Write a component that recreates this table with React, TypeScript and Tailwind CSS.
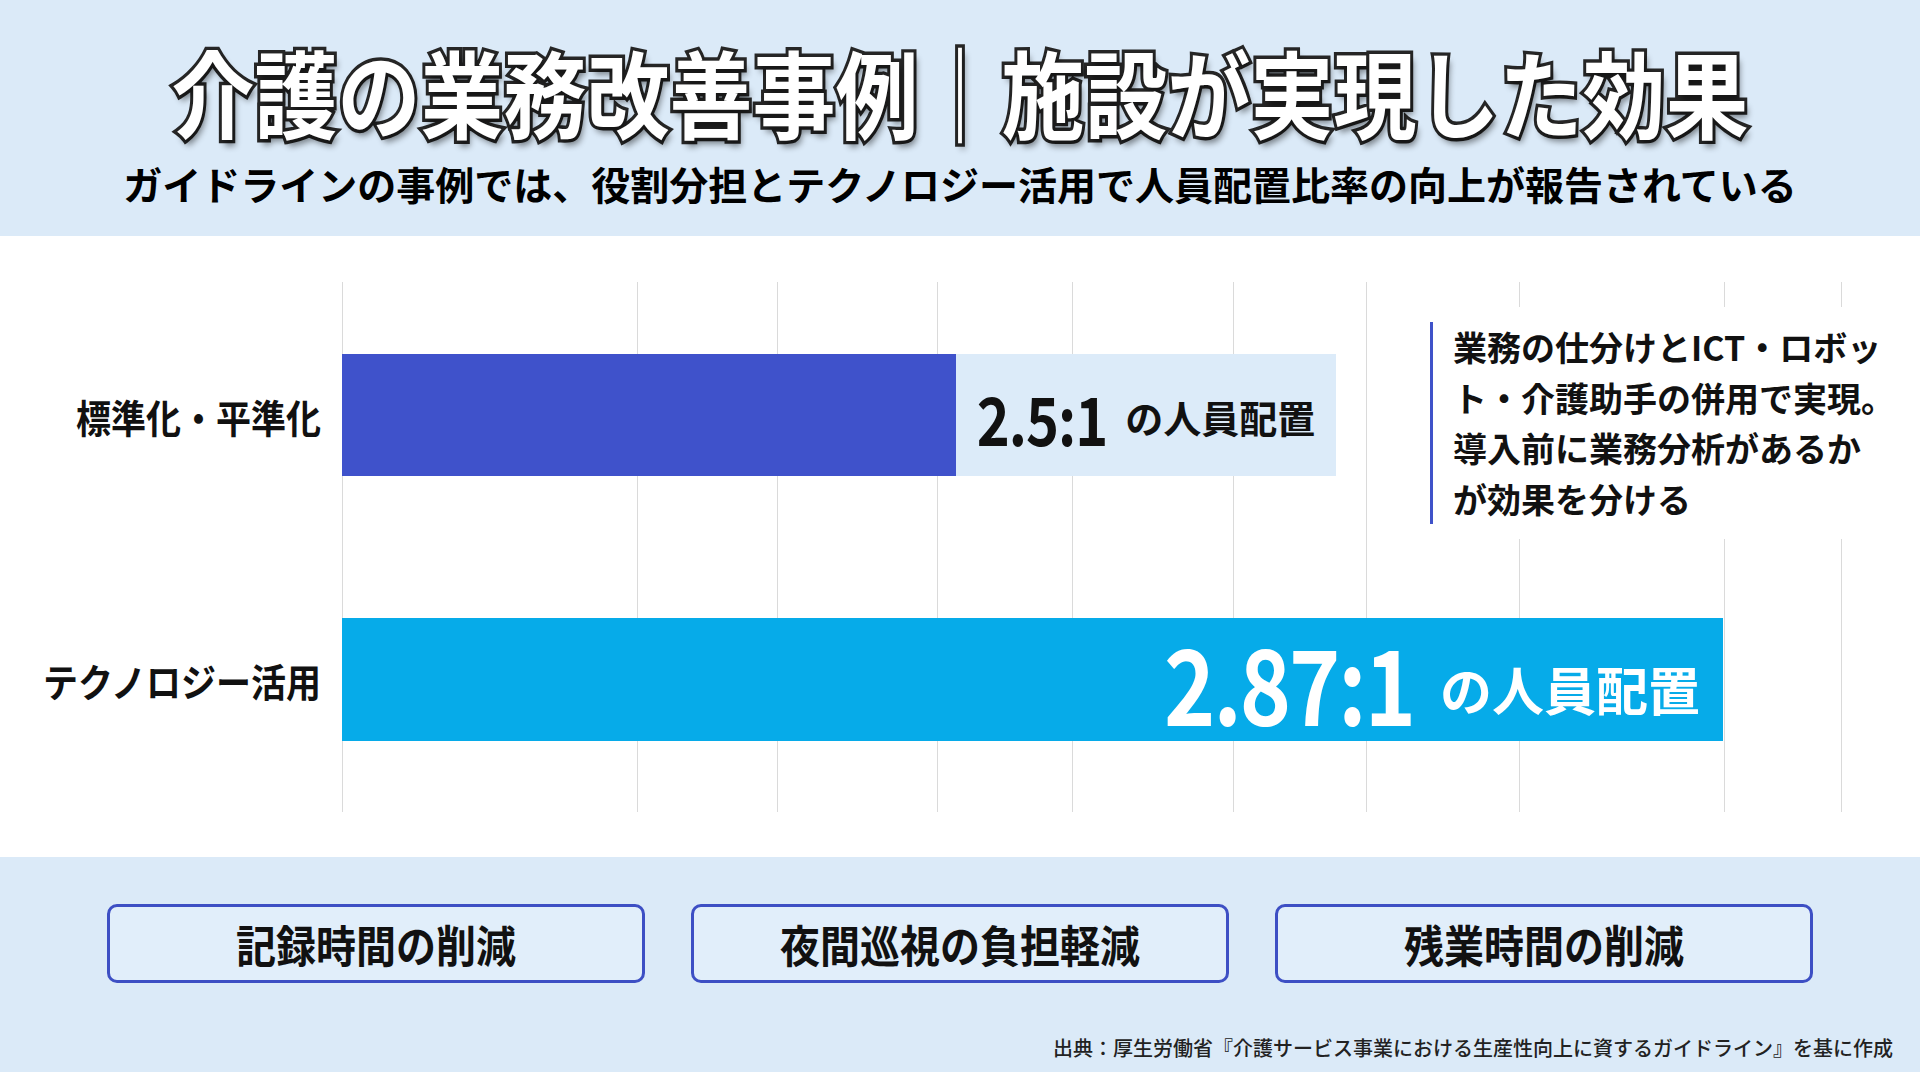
import React from "react";

const FONT = "font-['Noto_Sans_CJK_JP','Noto_Sans',sans-serif]";

// x positions of the vertical grid lines, px from the left edge of the page
const GRID_X = [342, 637, 777, 937, 1072, 1233, 1366, 1519, 1724, 1841];

const EFFECTS = ["記録時間の削減", "夜間巡視の負担軽減", "残業時間の削減"];

function Header() {
  return (
    <div className="flex h-[236px] flex-col items-center bg-[#dbeaf8] pt-[50px]">
      <h1 className="inline-block scale-y-[1.15] text-[83px] font-bold leading-none tracking-[0px] text-white [-webkit-text-stroke:6px_#262626] [paint-order:stroke_fill] [text-shadow:3px_5px_6px_rgba(0,0,0,0.45)]">
        介護の業務改善事例｜施設が実現した効果
      </h1>
      <p className="mt-[31px] text-[39px] font-bold leading-none text-black">
        ガイドラインの事例では、役割分担とテクノロジー活用で人員配置比率の向上が報告されている
      </p>
    </div>
  );
}

function RowLabel({ children }: { children: React.ReactNode }) {
  return (
    <div className="flex w-[342px] shrink-0 items-center justify-end pr-[21px]">
      <span className="inline-block scale-y-[1.1] text-[35px] font-bold leading-none text-[#111]">
        {children}
      </span>
    </div>
  );
}

function Chart() {
  return (
    <div className="h-[621px] bg-white pt-[46px]">
      <div className="relative h-[530px]">
        {/* grid */}
        {GRID_X.map((x) => (
          <div
            key={x}
            className="absolute top-0 bottom-0 w-px bg-[#dadada]"
            style={{ left: x }}
          />
        ))}

        <div className="relative z-10 flex flex-col gap-[142px] pt-[72px]">
          {/* standardisation row */}
          <div className="flex h-[122px]">
            <RowLabel>標準化・平準化</RowLabel>
            <div className="w-[614px] bg-[#3f52cb]" />
            <div className="flex w-[380px] items-center justify-center gap-[18px] bg-[#dcebf9] pt-[4px]">
              <span className="inline-block scale-y-[1.2] text-[56px] font-bold leading-none tracking-[-1px] text-[#111]">
                2.5:1
              </span>
              <span className="text-[38px] font-bold leading-none text-[#111]">の人員配置</span>
            </div>
          </div>

          {/* technology row */}
          <div className="flex h-[123px]">
            <RowLabel>テクノロジー活用</RowLabel>
            <div className="flex w-[1381px] items-center justify-end gap-[26px] bg-[#06abe9] pr-[23px] pt-[4px]">
              <span className="inline-block scale-y-[1.2] text-[87px] font-bold leading-none tracking-[-2px] text-white">
                2.87:1
              </span>
              <span className="mt-[14px] text-[52px] font-bold leading-none text-white">の人員配置</span>
            </div>
          </div>
        </div>

        {/* side note */}
        <div className="absolute top-[25px] left-[1418px] z-10 w-[480px] bg-white py-[15px] pl-[12px]">
          <div className="border-l-[3px] border-[#3f52c9] pl-[20px] text-[34px] font-bold leading-[50.5px] text-[#111]">
            業務の仕分けとICT・ロボッ
            <br />
            ト・介護助手の併用で実現。
            <br />
            導入前に業務分析があるか
            <br />
            が効果を分ける
          </div>
        </div>
      </div>
    </div>
  );
}

function Effects() {
  return (
    <div className="h-[215px] bg-[#dbeaf8] pt-[47px]">
      <div className="flex gap-[46px] pl-[107px]">
        {EFFECTS.map((label) => (
          <div
            key={label}
            className="flex h-[79px] w-[538px] items-center justify-center rounded-[10px] border-[3px] border-[#3d4fc4] bg-[#e1eefa]"
          >
            <span className="inline-block scale-y-[1.1] text-[40px] font-bold leading-none text-[#111]">
              {label}
            </span>
          </div>
        ))}
      </div>
      <p className="mt-[53px] pr-[27px] text-right text-[20px] font-medium leading-[24px] text-[#222]">
        出典：厚生労働省『介護サービス事業における生産性向上に資するガイドライン』を基に作成
      </p>
    </div>
  );
}

export default function App() {
  return (
    <div className={`h-[1072px] w-[1920px] overflow-hidden ${FONT}`}>
      <Header />
      <Chart />
      <Effects />
    </div>
  );
}
